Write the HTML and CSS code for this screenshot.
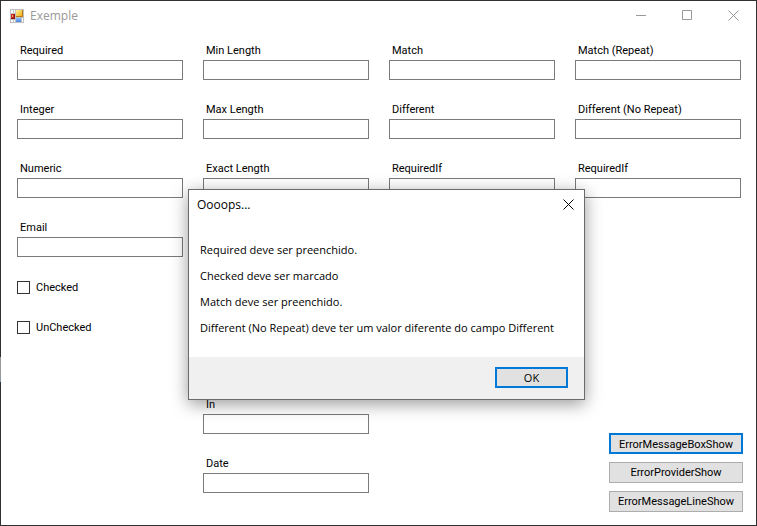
FILE: index.html
```html
<!DOCTYPE html>
<html lang="pt-BR">
<head>
<meta charset="utf-8">
<title>Exemple</title>
<link rel="stylesheet" href="styles.css">
</head>
<body>
<main class="window">
  <header class="titlebar">
    <svg class="app-icon" width="14" height="14" viewBox="0 0 14 14" shape-rendering="crispEdges" aria-hidden="true">
      <defs>
        <linearGradient id="gold" x1="0" y1="0" x2="1" y2="1"><stop offset="0" stop-color="#fff0a0"/><stop offset="1" stop-color="#f0b010"/></linearGradient>
        <linearGradient id="blue" x1="0" y1="0" x2="0" y2="1"><stop offset="0" stop-color="#8ebcff"/><stop offset="1" stop-color="#4a84e0"/></linearGradient>
      </defs>
      <path fill="#c0c0c0" d="M0 0h14v14H0z"/>
      <path fill="#fff" d="M1 1h2v3H1zM4 1h1v3H4zM1 11h2v2H1zM4 11h1v2H4zM12 9h1v4h-1z"/>
      <path fill="#b87c18" d="M6 1h7v7H6z"/><path fill="url(#gold)" d="M6 1h6v6H6z"/>
      <path fill="#8c1414" d="M1 5h4v5H1z"/><path fill="#cc2c20" d="M1 5h3v4H1z"/><path fill="#f09a88" d="M2 6h1v2H2z"/>
      <path fill="url(#blue)" d="M6 9h5v4H6z"/>
    </svg>
    <h1 class="title">Exemple</h1>
    <div class="controls">
      <button class="control" type="button" aria-label="Minimize"><svg width="11" height="11" viewBox="0 0 11 11"><path d="M0 5.500h10"/></svg></button>
      <button class="control" type="button" aria-label="Maximize"><svg width="11" height="11" viewBox="0 0 11 11"><path d="M.5.5h9v9h-9z"/></svg></button>
      <button class="control" type="button" aria-label="Close"><svg width="11" height="11" viewBox="0 0 11 11"><path d="M.5.5l10 10M10.500.5l-10 10"/></svg></button>
    </div>
  </header>
  <form class="form">
    <div class="fields">
      <div class="column">
        <div class="field"><label for="required">Required</label><input id="required" type="text"></div>
        <div class="field"><label for="integer">Integer</label><input id="integer" type="text"></div>
        <div class="field"><label for="numeric">Numeric</label><input id="numeric" type="text"></div>
        <div class="field"><label for="email">Email</label><input id="email" type="text"></div>
        <div class="checks">
          <label class="check"><input type="checkbox">Checked</label>
          <label class="check"><input type="checkbox">UnChecked</label>
        </div>
      </div>
      <div class="column">
        <div class="field"><label for="min">Min Length</label><input id="min" type="text"></div>
        <div class="field"><label for="max">Max Length</label><input id="max" type="text"></div>
        <div class="field"><label for="exact">Exact Length</label><input id="exact" type="text"></div>
        <div class="field last-pair"><label for="in">In</label><input id="in" type="text"></div>
        <div class="field"><label for="date">Date</label><input id="date" type="text"></div>
      </div>
      <div class="column">
        <div class="field"><label for="match">Match</label><input id="match" type="text"></div>
        <div class="field"><label for="different">Different</label><input id="different" type="text"></div>
        <div class="field"><label for="if1">RequiredIf</label><input id="if1" type="text"></div>
      </div>
      <div class="column">
        <div class="field"><label for="match2">Match (Repeat)</label><input id="match2" type="text"></div>
        <div class="field"><label for="different2">Different (No Repeat)</label><input id="different2" type="text"></div>
        <div class="field"><label for="if2">RequiredIf</label><input id="if2" type="text"></div>
      </div>
    </div>
    <div class="actions">
      <button class="button default" type="button">ErrorMessageBoxShow</button>
      <button class="button" type="button">ErrorProviderShow</button>
      <button class="button" type="button">ErrorMessageLineShow</button>
    </div>
  </form>
  <section class="dialog" role="dialog" aria-labelledby="dialog-title">
    <header class="dialog-head">
      <h2 class="dialog-title" id="dialog-title">Oooops...</h2>
      <button class="dialog-close" type="button" aria-label="Close"><svg width="11" height="11" viewBox="0 0 11 11"><path d="M.5.5l10 10M10.500.5l-10 10"/></svg></button>
    </header>
    <div class="messages">
      <p>Required deve ser preenchido.</p>
      <p>Checked deve ser marcado</p>
      <p>Match deve ser preenchido.</p>
      <p>Different (No Repeat) deve ter um valor diferente do campo Different</p>
    </div>
    <footer class="dialog-foot"><button class="button default ok" type="button">OK</button></footer>
  </section>
</main>
</body>
</html>
```
FILE: styles.css
```css
* { box-sizing: border-box; }
body { margin: 0; background: #fff; color: #000; font: 11px/18px Roboto, "Liberation Sans", sans-serif; }
h1, h2, p { margin: 0; font-weight: normal; }
button, input { font: inherit; color: inherit; margin: 0; padding: 0; }
svg { display: block; fill: none; stroke: none; }

.window { position: relative; display: flex; flex-direction: column; min-height: 100vh; border: 1px solid #303030; }
/* light patch on the left window edge */
.window::before { content: ""; position: absolute; left: -1px; top: 356px; width: 1px; height: 25px; background: linear-gradient(#999 70%, #8a9aaa); }

.titlebar { display: flex; align-items: center; height: 29px; padding-left: 9px; }
.title { margin-left: 6px; flex: 1; color: #999; font: 12px/16px "Open Sans", "Noto Sans", sans-serif; }
.controls { display: flex; }
.control { display: grid; place-items: center; width: 46px; height: 28px; border: 0; background: none; }
.control path { stroke: #999; }

.form { display: grid; flex: 1; }
.fields, .actions { grid-area: 1 / 1; }
.fields { display: grid; grid-template-columns: repeat(4, 1fr); gap: 20px; padding: 12px 15px 32px 16px; }
.column { display: flex; flex-direction: column; gap: 21px; }
.field { display: flex; flex-direction: column; }
.field label { padding-left: 3px; }
.field input { width: 100%; height: 20px; border: 1px solid #7a7a7a; background: #fff; }
.last-pair { margin-top: auto; }

.checks { display: flex; flex-direction: column; align-items: flex-start; gap: 21px; }
.check { display: flex; align-items: center; gap: 6px; height: 19px; line-height: 19px; }
.check input { appearance: none; width: 13px; height: 13px; border: 1px solid #333; background: #fff; }

.actions { display: flex; flex-direction: column; gap: 8px; place-self: end; width: 134px; margin: 0 13px 13px 0; }
.button { height: 21px; border: 1px solid #adadad; background: #e1e1e1; }
.actions .button { padding-top: 1px; }
.button.default { border: 2px solid #0078d7; }

.dialog { position: absolute; left: 187px; top: 188px; width: 397px; border: 1px solid #6b6b6b; background: #fff; box-shadow: 0 4px 16px rgba(0, 0, 0, .4); font: 11px/16px "Open Sans", "Noto Sans", sans-serif; }
.dialog-head { display: flex; align-items: center; justify-content: space-between; height: 29px; padding: 0 10px 0 8px; }
.dialog-title { font-size: 12px; }
.dialog-close { border: 0; background: none; }
.dialog-close path { stroke: #000; }
.messages { display: flex; flex-direction: column; gap: 10px; padding: 23px 11px 21px; }
.dialog-foot { display: flex; justify-content: flex-end; padding: 10px 16px 11px; background: #f0f0f0; }
.ok { width: 73px; }
```
